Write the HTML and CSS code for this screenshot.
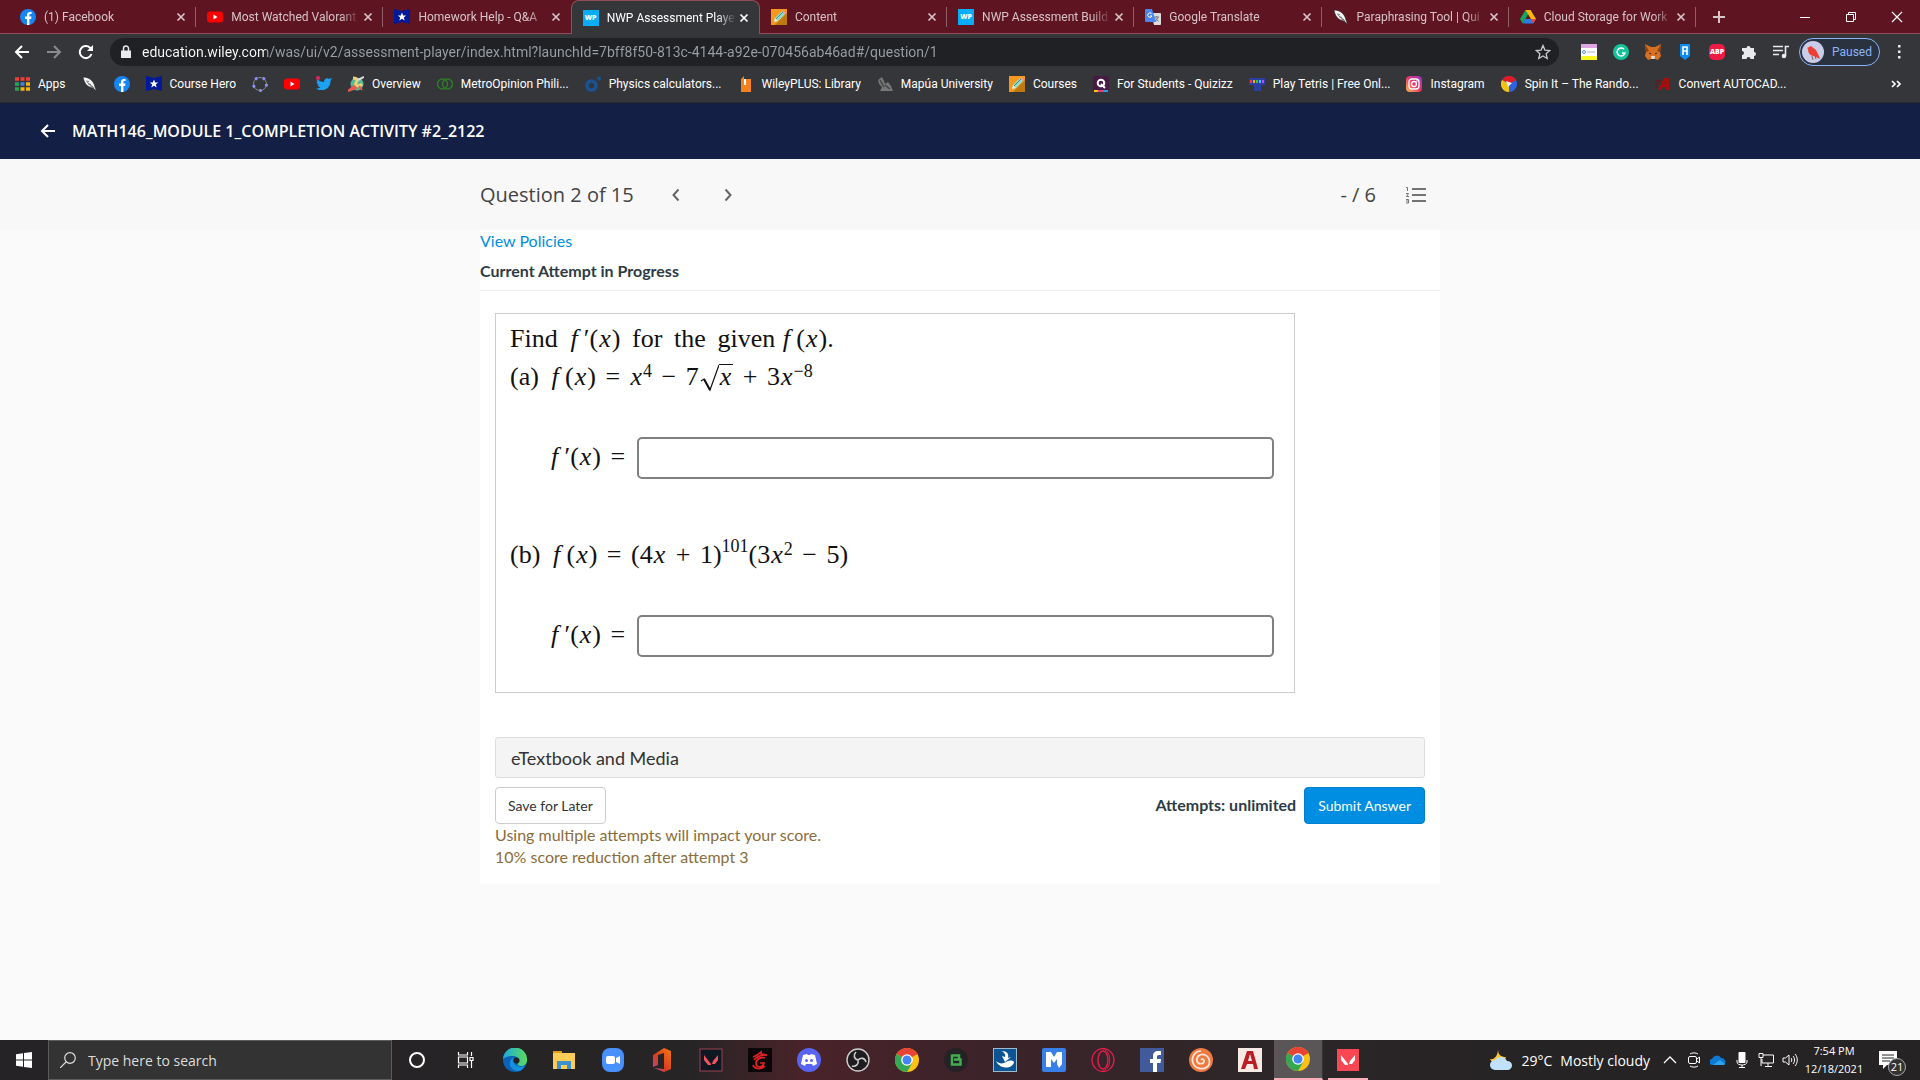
FILE: index.html
```html
<!DOCTYPE html>
<html lang="en">
  <head>
    <meta charset="utf-8" />
    <title>NWP Assessment Player</title>
    <link rel="stylesheet" href="styles.css">
  </head>
  <body>
    <!-- Icons that are used on the page -->
    <svg class="sprite" aria-hidden="true">
      <linearGradient id="insta-fill" x1="0" y1="1" x2="1" y2="0"><stop offset="0" stop-color="#fdc04a" /><stop offset=".5" stop-color="#e8336d" /><stop offset="1" stop-color="#8a3ac8" /></linearGradient>
      <linearGradient id="edge-fill" x1="0" y1="0" x2="1" y2="0"><stop offset="0" stop-color="#1ca8df" /><stop offset="1" stop-color="#5bdc5b" /></linearGradient>
      <linearGradient id="office-fill" x1="0" y1="1" x2="1" y2="0"><stop offset="0" stop-color="#b050a8" /><stop offset=".4" stop-color="#d83b20" /><stop offset="1" stop-color="#f57a12" /></linearGradient>
      <symbol id="facebook" viewBox="0 0 16 16"><circle cx="8" cy="8" r="8" fill="#1685f5" /><path d="M7 16v-6H5V7.600h2V6c0-2 1.200-3.100 3-3.100l1.600.1v2h-1c-1 0-1.200.5-1.200 1.200v1.400h2.100l-.4 2.400H9.400v6z" fill="#fff" /></symbol>
      <symbol id="youtube" viewBox="0 0 16 16"><rect y="2.500" width="16" height="11" rx="3" fill="#f00" /><path d="M6.500 5.500v5l4-2.500z" fill="#fff" /></symbol>
      <symbol id="hero" viewBox="0 0 16 16"><path d="M0 0l8 2 8-2v15l-8-2-8 2z" fill="#00199a" /><path d="M8 3.500l1.200 3h3l-2.400 1.900.9 3.100L8 9.700l-2.700 1.800.9-3.100-2.400-1.900h3z" fill="#fff" /></symbol>
      <symbol id="pencil" viewBox="0 0 16 16"><rect width="16" height="16" fill="#f5981c" /><path d="M16 4v12H4z" fill="#c07810" /><path d="M3 13l1-4 7-7 3 3-7 7z" fill="#8fdcd4" /><path d="M5 10l7-7" stroke="#3c8d88" /><path d="M11 2l1-1 3 3-1 1z" fill="#f49aa0" /><path d="M3 13l1-4 3 3z" fill="#fbe3bb" /></symbol>
      <symbol id="feather" viewBox="0 0 16 16"><path d="M1 1c6 0 11 4 12 10l1.500 4L11 12C5 11 2 7 1 1z" fill="#f4f4f4" stroke="#222" stroke-width=".6" /><path d="M5 6l7 6M4 5l3 .5M6 8l3 .5M8 10l3 .5" stroke="#555" stroke-width=".7" /></symbol>
      <symbol id="drive" viewBox="0 0 16 16"><path d="M5.500 1h5L8 5.500 2.800 14.500 0 10z" fill="#11a75c" /><path d="M5.500 1h5L16 10h-5z" fill="#ffba00" /><path d="M5.300 10H16l-2.800 4.500H2.800z" fill="#2a7bec" /><path d="M11 10h5l-2.800 4.500z" fill="#ea4335" /></symbol>
      <symbol id="close" viewBox="0 0 16 16"><path d="M4.500 4.500l7 7m0-7l-7 7" stroke="currentColor" stroke-width="1.700" /></symbol>
      <symbol id="back" viewBox="0 0 16 16"><path d="M15 8H2m6-6L2 8l6 6" stroke="currentColor" stroke-width="2" fill="none" /></symbol>
      <symbol id="grid" viewBox="0 0 16 16"><path d="M1 3h4m1.500 0h4M12 3h4" stroke="#ee4037" stroke-width="3.500" /><path d="M1 8h4" stroke="#27a35a" stroke-width="3.500" /><path d="M6.500 8h4" stroke="#3a83ed" stroke-width="3.500" /><path d="M12 8h4" stroke="#f6b50b" stroke-width="3.500" /><path d="M1 13h4" stroke="#27a35a" stroke-width="3.500" /><path d="M6.500 13h9.500" stroke="#f6b50b" stroke-width="3.500" stroke-dasharray="4 1.500" /></symbol>
      <symbol id="orbit" viewBox="0 0 16 16"><circle cx="8" cy="8" r="6.500" fill="none" stroke="#888" /><circle cx="8" cy="8" r="6.500" fill="none" stroke="#8f8fff" stroke-width="2.800" stroke-dasharray="2.500 5.670" /></symbol>
      <symbol id="twitter" viewBox="0 0 16 16"><path d="M1 3c2 2 4 3 7 3 0-3 3-5 5-3l3-1-1.500 3C14.500 11 10 14.500 5 14 3 14 1.500 13.500 0 12.500c2 0 3.500-.4 4.500-1.200C3 11 2 10 1.600 9H3C1.500 8.500.6 7 .6 5.500L2 6C.7 5 .4 4 1 3z" fill="#1da1f2" /><circle cx="2" cy="2" r="2" fill="#e0245e" /></symbol>
      <symbol id="planet" viewBox="0 0 16 16"><circle cx="9" cy="8" r="6.500" fill="#57b896" /><path d="M5 2c4 0 5 2 3 5s3 4 6 1" stroke="#f4cf77" stroke-width="3" fill="none" /><path d="M0 15l6-5 2 2zM11 10l3 4" stroke="#e85a50" stroke-width="2" fill="#e85a50" /><path d="M10 4l6-3" stroke="#ddd" stroke-width="2" /></symbol>
      <symbol id="rings" viewBox="0 0 16 16"><circle cx="5.500" cy="8" r="5" fill="none" stroke="#2f7a26" stroke-width="1.500" /><circle cx="10.500" cy="8" r="5" fill="none" stroke="#2f7a26" stroke-width="1.500" /></symbol>
      <symbol id="omni" viewBox="0 0 16 16"><circle cx="6.500" cy="9.500" r="4.500" fill="none" stroke="#1b5291" stroke-width="3.600" /><circle cx="14" cy="2.500" r="2" fill="#1b5291" /></symbol>
      <symbol id="book" viewBox="0 0 16 16"><path d="M3 3l3-3v3h7v13H3z" fill="#f58220" /><path d="M6 3h2v6H6z" fill="#fff" /></symbol>
      <symbol id="mapua" viewBox="0 0 16 16"><path d="M1 4l4-3 2 4 1 3 3-2 3 4 2 5H3l2-4-3-3z" fill="#777" /><path d="M3 4l4 7M8 9l5 4" stroke="#444" stroke-width="1.500" /></symbol>
      <symbol id="quizizz" viewBox="0 0 16 16"><rect width="16" height="16" rx="2" fill="#461a42" /><circle cx="8" cy="7" r="3.300" fill="none" stroke="#fff" stroke-width="2" /><path d="M8 8l4 4" stroke="#fff" stroke-width="2" /><path d="M1 15h4" stroke="#fc0" stroke-width="2" /><path d="M5 15h5" stroke="#ec3d75" stroke-width="2" /><path d="M10 15h5" stroke="#1fa2e0" stroke-width="2" /></symbol>
      <symbol id="tetris" viewBox="0 0 16 16"><path d="M0 2h16v7h-4v6H5V9H0z" fill="#2c3fa0" /><path d="M2 4v3" stroke="#f33" stroke-width="2" /><path d="M5 4v3" stroke="#fa0" stroke-width="2" /><path d="M8 4v3" stroke="#2c4" stroke-width="2" /><path d="M11 4v3" stroke="#3cf" stroke-width="2" /><path d="M14 4v3" stroke="#c4f" stroke-width="2" /></symbol>
      <symbol id="instagram" viewBox="0 0 16 16"><rect width="16" height="16" rx="4" fill="url(#insta-fill)" /><rect x="3" y="3" width="10" height="10" rx="3" fill="none" stroke="#fff" stroke-width="1.300" /><circle cx="8" cy="8" r="2.500" fill="none" stroke="#fff" stroke-width="1.300" /><circle cx="11" cy="5" r=".8" fill="#fff" /></symbol>
      <symbol id="wheel" viewBox="0 0 16 16"><circle cx="8" cy="8" r="8" fill="#2d62e8" /><path d="M8 8L1 4a8 8 0 0 1 14 0z" fill="#e01b24" /><path d="M8 8v8A8 8 0 0 1 1 4z" fill="#f5c211" /><path d="M5 5l6 2-4 4z" fill="#eee" /></symbol>
      <symbol id="cad" viewBox="0 0 16 16"><path d="M3 14L9 2h5v12h-3v-3H8l-2 3zM9 8h2V5z" fill="#a80d0d" fill-rule="evenodd" /><path d="M0 5h6M0 8h4M0 11h3" stroke="#651a1c" stroke-width="1.500" /></symbol>
      <symbol id="chrome" viewBox="0 0 24 24"><circle cx="12" cy="12" r="12" fill="#fbc116" /><path d="M12 12L1.600 6A12 12 0 0 1 22.400 6z" fill="#e94335" /><path d="M12 12L1.600 6A12 12 0 0 0 12 24l5.200-9z" fill="#35a853" /><path d="M12 6h10.400" stroke="#e94335" /><circle cx="12" cy="12" r="5.800" fill="#fff" /><circle cx="12" cy="12" r="4.500" fill="#4285f4" /></symbol>
      <symbol id="valorant" viewBox="0 0 24 24"><path d="M5 7l7 9v1H9l-4-5zm14 0v5l-3 4h-3l1-3z" fill="currentColor" /></symbol>
    </svg>

    <!-- Browser window -->
    <header class="browser">
      <div class="tab-strip">
        <nav class="tabs">
          <div class="tab"><svg class="icon"><use href="#facebook" /></svg><span class="tab-title">(1) Facebook</span><button class="tab-close" aria-label="Close"><svg class="icon"><use href="#close" /></svg></button></div>
          <div class="tab"><svg class="icon"><use href="#youtube" /></svg><span class="tab-title">Most Watched Valorant</span><button class="tab-close" aria-label="Close"><svg class="icon"><use href="#close" /></svg></button></div>
          <div class="tab"><svg class="icon"><use href="#hero" /></svg><span class="tab-title">Homework Help - Q&amp;A</span><button class="tab-close" aria-label="Close"><svg class="icon"><use href="#close" /></svg></button></div>
          <div class="tab active"><span class="wiley-icon">WP</span><span class="tab-title">NWP Assessment Playe</span><button class="tab-close" aria-label="Close"><svg class="icon"><use href="#close" /></svg></button></div>
          <div class="tab"><svg class="icon"><use href="#pencil" /></svg><span class="tab-title">Content</span><button class="tab-close" aria-label="Close"><svg class="icon"><use href="#close" /></svg></button></div>
          <div class="tab"><span class="wiley-icon">WP</span><span class="tab-title">NWP Assessment Build</span><button class="tab-close" aria-label="Close"><svg class="icon"><use href="#close" /></svg></button></div>
          <div class="tab"><svg class="icon" viewBox="0 0 16 16"><path d="M6 4h9a1 1 0 0 1 1 1v10a1 1 0 0 1-1 1H9z" fill="#dcdcdc" /><path d="M1 0h6l4 13H1a1 1 0 0 1-1-1V1a1 1 0 0 1 1-1z" fill="#4b86ee" /><path d="M6.500 4.500a2.200 2.200 0 1 0 .5 2.500H5" stroke="#fff" fill="none" /><path d="M9 8h5M11.500 7v1M13 8c0 2-1.500 3-3 4M10.500 9l3 3.500" stroke="#6b7a86" fill="none" /></svg><span class="tab-title">Google Translate</span><button class="tab-close" aria-label="Close"><svg class="icon"><use href="#close" /></svg></button></div>
          <div class="tab"><svg class="icon"><use href="#feather" /></svg><span class="tab-title">Paraphrasing Tool | Qui</span><button class="tab-close" aria-label="Close"><svg class="icon"><use href="#close" /></svg></button></div>
          <div class="tab"><svg class="icon"><use href="#drive" /></svg><span class="tab-title">Cloud Storage for Work</span><button class="tab-close" aria-label="Close"><svg class="icon"><use href="#close" /></svg></button></div>
        </nav>
        <div class="window-buttons">
          <button aria-label="New tab"><svg class="icon" viewBox="0 0 16 16"><path d="M8 2v12M2 8h12" stroke="#d9c4c8" stroke-width="2" /></svg></button>
          <button class="minimize" aria-label="Minimize"><svg class="icon" viewBox="0 0 16 16"><path d="M3 8.500h10" stroke="#fff" /></svg></button>
          <button aria-label="Restore"><svg class="icon" viewBox="0 0 16 16"><path d="M3.500 5.500h7v7h-7zM5.500 5V3.500h7v7H11" stroke="#fff" fill="none" /></svg></button>
          <button aria-label="Close window"><svg class="icon" viewBox="0 0 16 16"><path d="M3 3l10 10M13 3L3 13" stroke="#fff" stroke-width="1.200" /></svg></button>
        </div>
      </div>

      <div class="toolbar">
        <button aria-label="Back"><svg class="icon"><use href="#back" /></svg></button>
        <button class="forward" aria-label="Forward"><svg class="icon" viewBox="0 0 16 16"><path d="M1 8h13M8 2l6 6-6 6" stroke="currentColor" stroke-width="2" fill="none" /></svg></button>
        <button aria-label="Reload"><svg class="icon" viewBox="0 0 16 16"><path d="M13.500 10A6 6 0 1 1 12 3.800l1.500 1.500" stroke="currentColor" stroke-width="2" fill="none" /><path d="M15 1v6H9z" fill="currentColor" /></svg></button>
        <div class="address">
          <svg class="icon" viewBox="0 0 16 16"><path d="M3 6.500h10V14H3z" fill="#e8eaed" /><path d="M5.500 7V4.500a2.500 2.500 0 0 1 5 0V7" stroke="#e8eaed" stroke-width="1.500" fill="none" /></svg>
          <input class="url" type="text" aria-label="Address" value="education.wiley.com/was/ui/v2/assessment-player/index.html?launchId=7bff8f50-813c-4144-a92e-070456ab46ad#/question/1" />
          <svg class="icon" viewBox="0 0 16 16"><path d="M8 1.500l1.900 4.600 4.900.4-3.700 3.200 1.100 4.800L8 11.900l-4.200 2.600 1.100-4.800L1.200 6.500l4.900-.4z" fill="none" stroke="#c8cacd" stroke-width="1.300" /></svg>
        </div>
        <div class="extensions">
          <svg class="icon" viewBox="0 0 16 16"><path d="M0 0h16v16H0z" fill="#fff" /><path d="M0 0h16v4H0z" fill="#dfa6e4" /><path d="M0 12h16v4H0z" fill="#f7f722" /><circle cx="3" cy="8" r="1.500" fill="none" stroke="#4a90e2" /><path d="M6 8h8" stroke="#a9b5c9" /></svg>
          <svg class="icon" viewBox="0 0 16 16"><circle cx="8" cy="8" r="8" fill="#15c39a" /><path d="M11 5.200A4 4 0 1 0 12 9H9" fill="none" stroke="#fff" stroke-width="1.500" /></svg>
          <svg class="icon" viewBox="0 0 16 16"><path d="M0 0l6 3h4l6-3-1 8 1 4-3 4-3-1H6l-3 1-3-4 1-4z" fill="#d96f20" /><path d="M0 0l4 7-3 1zM16 0l-4 7 3 1z" fill="#8a4412" /><path d="M6 12h4l-.5 3h-3z" fill="#ddd" /><path d="M4 9l2 1M12 9l-2 1" stroke="#222" /></svg>
          <svg class="icon" viewBox="0 0 16 16"><path d="M3 0h10v12l-5 4-5-4z" fill="#0c8cf5" /><path d="M6 3h4v4H6zM6 3v8m4-4v4" stroke="#fff" stroke-width="1.600" fill="none" /></svg>
          <span class="abp-icon">ABP</span>
          <svg class="icon" viewBox="0 0 16 16"><path d="M1 4h4.500a2 2 0 1 1 4 0H13v4a2 2 0 1 1 0 4v3H9.500a2 2 0 1 0-4 0H1v-4a2 2 0 1 0 0-4z" fill="#e8eaed" /></svg>
          <svg class="icon" viewBox="0 0 16 16"><path d="M0 2.500h10M0 6.500h10M0 10.500h6M12.500 12V2.500H16" stroke="#e8eaed" stroke-width="1.600" fill="none" /><circle cx="11" cy="12" r="2.300" fill="#e8eaed" /></svg>
        </div>
        <button class="profile"><svg class="avatar" viewBox="0 0 22 22"><circle cx="11" cy="11" r="11" fill="#c9cdea" /><path d="M5 7l4-2 5 4 3 6 1 3-6-3c-4 0-6-3-6-7z" fill="#ee3f35" /><path d="M10 15l1 4m2-4l1 3" stroke="#8f5a55" /></svg>Paused</button>
        <button class="menu" aria-label="Menu"><svg class="icon" viewBox="0 0 16 16"><path d="M7 1h2.500v2.500H7zM7 6.500h2.500V9H7zM7 12h2.500v2.500H7z" fill="#e8eaed" /></svg></button>
      </div>

      <nav class="bookmarks">
        <a href="#"><svg class="icon"><use href="#grid" /></svg>Apps</a>
        <a href="#" aria-label="QuillBot"><svg class="icon"><use href="#feather" /></svg></a>
        <a href="#" aria-label="Facebook"><svg class="icon"><use href="#facebook" /></svg></a>
        <a href="#"><svg class="icon"><use href="#hero" /></svg>Course Hero</a>
        <a href="#" aria-label="GeoGebra"><svg class="icon"><use href="#orbit" /></svg></a>
        <a href="#" aria-label="YouTube"><svg class="icon"><use href="#youtube" /></svg></a>
        <a href="#" aria-label="Twitter"><svg class="icon"><use href="#twitter" /></svg></a>
        <a href="#"><svg class="icon"><use href="#planet" /></svg>Overview</a>
        <a href="#"><svg class="icon"><use href="#rings" /></svg>MetroOpinion Phili...</a>
        <a href="#"><svg class="icon"><use href="#omni" /></svg>Physics calculators...</a>
        <a href="#"><svg class="icon"><use href="#book" /></svg>WileyPLUS: Library</a>
        <a href="#"><svg class="icon"><use href="#mapua" /></svg>Mapúa University</a>
        <a href="#"><svg class="icon"><use href="#pencil" /></svg>Courses</a>
        <a href="#"><svg class="icon"><use href="#quizizz" /></svg>For Students - Quizizz</a>
        <a href="#"><svg class="icon"><use href="#tetris" /></svg>Play Tetris | Free Onl...</a>
        <a href="#"><svg class="icon"><use href="#instagram" /></svg>Instagram</a>
        <a href="#"><svg class="icon"><use href="#wheel" /></svg>Spin It – The Rando...</a>
        <a href="#"><svg class="icon"><use href="#cad" /></svg>Convert AUTOCAD...</a>
        <button class="more" aria-label="More bookmarks"><svg class="icon" viewBox="0 0 16 16"><path d="M4 5l3 3-3 3m5-6l3 3-3 3" stroke="#fff" stroke-width="1.700" fill="none" /></svg></button>
      </nav>
    </header>

    <!-- Assessment player -->
    <div class="course-bar">
      <a href="#" aria-label="Back to course"><svg class="icon"><use href="#back" /></svg></a>
      <h1>MATH146_MODULE 1_COMPLETION ACTIVITY #2_2122</h1>
    </div>

    <div class="question-bar">
      <div class="question-nav">
        <h2>Question 2 of 15</h2>
        <button aria-label="Previous question"><svg class="icon" viewBox="0 0 16 16"><path d="M10.500 2.500L5.500 8l5 5.500" stroke="#666" stroke-width="2" fill="none" /></svg></button>
        <button aria-label="Next question"><svg class="icon" viewBox="0 0 16 16"><path d="M5.500 2.500l5 5.500-5 5.500" stroke="#666" stroke-width="2" fill="none" /></svg></button>
        <span class="score">- / 6</span>
        <button class="list-button" aria-label="Question list"><svg class="list-icon" viewBox="0 0 20 18"><path d="M6 3h14M6 9h14M6 15h14" stroke="#737373" stroke-width="2" /><path d="M0 1.500h1.500V5M0 7.500h2.500L.5 10.500H3M0 13.500h2.500v3.500H0M0 15h2" stroke="#737373" fill="none" /></svg></button>
      </div>
    </div>

    <main class="card">
      <a class="policies" href="#">View Policies</a>
      <p class="attempt">Current Attempt in Progress</p>

      <div class="question">
        <p>Find&thinsp; <i>f</i>&thinsp;′(<i>x</i>)&thinsp; for&thinsp; the&thinsp; given <i>f</i>&thinsp;(<i>x</i>).</p>
        <p>(a)&thinsp; <i>f</i>&thinsp;(<i>x</i>) <b>=</b> <i>x</i><sup>4</sup> <b>−</b> 7<svg class="root" viewBox="0 0 20 28"><path d="M2 17l3-2 6 11L20 1" fill="none" stroke="#111" stroke-width="1.200" /><path d="M5 15l6 11" stroke="#111" stroke-width="2" /></svg><span class="radicand"><i>x</i></span> <b>+</b> 3<i>x</i><sup>−8</sup></p>
        <div class="answer">
          <label for="answer-a"><i>f</i>&thinsp;′(<i>x</i>) <b>=</b></label>
          <input type="text" id="answer-a" />
        </div>
        <p>(b)&thinsp; <i>f</i>&thinsp;(<i>x</i>) <b>=</b> (4<i>x</i> <b>+</b> 1)<sup class="high">101</sup>(3<i>x</i><sup>2</sup> <b>−</b> 5)</p>
        <div class="answer">
          <label for="answer-b"><i>f</i>&thinsp;′(<i>x</i>) <b>=</b></label>
          <input type="text" id="answer-b" />
        </div>
      </div>

      <div class="actions">
        <button class="media-button">eTextbook and Media</button>
        <div class="submit-row">
          <button class="save-button">Save for Later</button>
          <span class="attempts">Attempts: unlimited</span>
          <button class="submit-button">Submit Answer</button>
        </div>
        <p class="warning">Using multiple attempts will impact your score.<br />10% score reduction after attempt 3</p>
      </div>
    </main>

    <!-- Windows taskbar -->
    <footer class="taskbar">
      <button class="start" aria-label="Start"><svg class="icon" viewBox="0 0 16 16"><path d="M0 2.200l7-1v6.300H0zM8 1l8-1v7.500H8zM0 8.500h7v6.300l-7-1zM8 8.500h8V16l-8-1z" fill="#fff" /></svg></button>
      <label class="search">
        <svg class="icon" viewBox="0 0 16 16"><circle cx="10" cy="6" r="5.300" fill="none" stroke="#ddd" stroke-width="1.200" /><path d="M6 10l-6 6" stroke="#ddd" stroke-width="1.200" /></svg>
        <input type="text" placeholder="Type here to search" aria-label="Search" />
      </label>
      <div class="apps">
        <button aria-label="Cortana"><svg viewBox="0 0 24 24"><circle cx="12" cy="12" r="7" fill="none" stroke="#fff" stroke-width="2" /></svg></button>
        <button aria-label="Task view"><svg viewBox="0 0 24 24"><path d="M4.500 4v3h9V4M4.500 20v-3h9v3M4.500 9h9v6h-9zM17.500 4v4m0 5v7M16 9.500h3v3h-3z" fill="none" stroke="#fff" stroke-width="1.200" /></svg></button>
        <button aria-label="Edge"><svg viewBox="0 0 24 24"><circle cx="12" cy="12" r="12" fill="#0b62b8" /><path d="M0 11A12 12 0 0 1 24 12c0 4-3 6-6 6-3 0-4-1-3-3 2-4-1-7-5-7-5 0-8 1-10 3z" fill="url(#edge-fill)" /><path d="M15 23C6 23 4 12 11 9c-3 5 2 12 11 9-2 3-4 5-7 5z" fill="#1490df" /><circle cx="13.500" cy="12.500" r="3" fill="#242226" /></svg></button>
        <button aria-label="File Explorer"><svg viewBox="0 0 24 24"><path d="M1 3h9v4H1z" fill="#e09b11" /><path d="M1 5h22v16H1z" fill="#fcce58" /><path d="M5 21v-8h14v8h-4v-4H9v4z" fill="#3c91cf" /></svg></button>
        <button aria-label="Zoom"><svg viewBox="0 0 24 24"><rect x="1" width="22" height="24" rx="8" fill="#4890fa" /><rect x="5" y="8" width="9" height="8" rx="2" fill="#fff" /><path d="M15 10l4-2v8l-4-2z" fill="#fff" /></svg></button>
        <button aria-label="Office"><svg viewBox="0 0 24 24"><path d="M3 7l11-7 7 3v18l-7 3-10-4 10 1V5L8 7v10l-5 2z" fill="url(#office-fill)" /></svg></button>
        <button class="agent-dark" aria-label="Valorant Tracker"><svg viewBox="0 0 24 24"><rect x="1" y="1" width="22" height="22" fill="#0f1722" stroke="#9b4351" /><use href="#valorant" /></svg></button>
        <button aria-label="Garena"><svg viewBox="0 0 24 24"><rect width="24" height="24" rx="1" fill="#080607" /><path d="M5 9c3-1 5-2 8-5v2l6 1c-5 0-10 1-13 5M17 10c-4-1-9 1-9 5 0 5 7 5 8 0h-4M5 17c1 4 8 5 12 1" fill="none" stroke="#e02227" stroke-width="1.700" /></svg></button>
        <button aria-label="Discord"><svg viewBox="0 0 24 24"><circle cx="12" cy="12" r="12" fill="#5865f2" /><path d="M6 7l4-1 1 1h2l1-1 4 1 2 9-4 2-1-2H9l-1 2-4-2z" fill="#fff" /><circle cx="9.500" cy="12.500" r="1.500" fill="#5865f2" /><circle cx="14.500" cy="12.500" r="1.500" fill="#5865f2" /></svg></button>
        <button aria-label="OBS Studio"><svg viewBox="0 0 24 24"><circle cx="12" cy="12" r="11" fill="#1e1c1e" stroke="#ccc" stroke-width="1.400" /><path d="M12 12c-4-1-5-5-2-8m2 8c3-3 7-2 8 2m-8-2c1 4-2 7-6 6" fill="none" stroke="#ccc" stroke-width="1.600" /></svg></button>
        <button aria-label="Chrome"><svg><use href="#chrome" /></svg></button>
        <button aria-label="Bandicam"><svg viewBox="0 0 24 24"><circle cx="12" cy="12" r="12" fill="#242224" /><path d="M8 7.500h7v4M8 6.500v10h8.500v-5H10" fill="none" stroke="#41ad51" stroke-width="2.500" /></svg></button>
        <button aria-label="Installer"><svg viewBox="0 0 24 24"><rect x=".5" y=".5" width="23" height="23" fill="#0c5595" stroke="#9db9cc" /><path d="M3 13c3 3 7 3 10 1 3-2 7-2 8 0-1 7-14 8-18-1zM9 3c5 0 7 3 6 7l3-1-6 5-3-6 3 1c1-3-1-4-3-6z" fill="#fff" /></svg></button>
        <button aria-label="Messages"><svg viewBox="0 0 24 24"><rect width="24" height="24" rx="2" fill="#397fe9" /><path d="M4 19V4h5l3 5 3-5h5v12l-3 4-2-4v-5l-3 4-3-4v8z" fill="#fff" /></svg></button>
        <button aria-label="Opera GX"><svg viewBox="0 0 24 24"><ellipse cx="12" cy="12" rx="11" ry="11.500" fill="none" stroke="#e01d4c" stroke-width="1.300" /><ellipse cx="12" cy="12" rx="5" ry="9" fill="none" stroke="#e01d4c" stroke-width="1.500" /><path d="M12 1c9 2 9 20 0 22" fill="none" stroke="#e01d4c" /></svg></button>
        <button aria-label="Facebook"><svg viewBox="0 0 24 24"><path d="M0 0h24v24H0z" fill="#405a9c" /><path d="M13 24v-9h-3v-4h3V8c0-3 2-5 5-5h3v4h-2c-2 0-2 1-2 2v2h4l-.5 4H17v9z" fill="#fff" /></svg></button>
        <button aria-label="Swirl"><svg viewBox="0 0 24 24"><circle cx="12" cy="12" r="12" fill="#ef7a40" /><path d="M12 12c1-2 4 0 3 2s-6 3-7-1 3-8 8-6 6 9 2 12-12 2-14-4S6 3 12 3" fill="none" stroke="#ffe8db" stroke-width="1.700" /></svg></button>
        <button aria-label="AutoCAD"><svg viewBox="0 0 24 24"><path d="M0 0h24v24H0z" fill="#f8e9e4" /><path d="M3 21L9 3h6l5 18h-4l-1-5H9l-2 5zm7-8h4l-2-7z" fill="#b91e25" fill-rule="evenodd" /></svg></button>
        <button class="running" aria-label="Chrome window"><svg><use href="#chrome" /></svg></button>
        <button class="open agent-red" aria-label="Valorant"><svg viewBox="0 0 24 24"><rect x="1" y="1" width="22" height="22" fill="#fb4653" /><use href="#valorant" /></svg></button>
      </div>

      <div class="tray">
        <button class="weather"><svg viewBox="0 0 24 24"><path d="M9 1c0 6 3 8 8 8-2 8-13 9-16 2 5 1 8-4 8-10z" fill="#fdc52d" /><path d="M6 22a5 5 0 0 1 0-10 7 7 0 0 1 12 1 4.500 4.500 0 0 1 1 9z" fill="#c1e1fa" /></svg><span>29°C</span><span>Mostly cloudy</span></button>
        <svg viewBox="0 0 16 16"><path d="M2 11l6-6 6 6" fill="none" stroke="#fff" stroke-width="1.300" /></svg>
        <svg viewBox="0 0 16 16"><rect x="2.500" y="4.500" width="8" height="7" rx="1.500" fill="none" stroke="#fff" /><path d="M11 7l2.500-2v6L11 9M4 2c2-1.500 6-1.500 8 0M4 14c2 1.500 6 1.500 8 0" fill="none" stroke="#fff" /></svg>
        <svg viewBox="0 0 16 16"><path d="M3 13a3 3 0 0 1-1-6 5 5 0 0 1 9-1 4 4 0 0 1 3 7z" fill="#0f7ad6" /><path d="M3 13l7-5 5 4-1 1z" fill="#2aa5ec" /></svg>
        <svg viewBox="0 0 16 16"><rect x="4.500" y="0" width="7" height="11" rx="1" fill="#fff" /><path d="M3 8v2c0 4 10 4 10 0V8M8 13v3M5 15.500h6" fill="none" stroke="#fff" /></svg>
        <svg viewBox="0 0 16 16"><path d="M5 3h10.500v8H4V7M1 1.500h4v4H1zM3 6v8M7 14.500h7M10 11v3" fill="none" stroke="#fff" /></svg>
        <svg viewBox="0 0 16 16"><path d="M1 6h2.500L7 3v10l-3.500-3H1zM9 6c1 1 1 3 0 4M11 4c2 2 2 6 0 8M13 2c3 3 3 9 0 12" fill="none" stroke="#fff" /></svg>
        <div class="clock"><time>7:54 PM</time><time>12/18/2021</time></div>
        <button class="notices" aria-label="Notifications"><svg viewBox="0 0 20 20"><path d="M1 1h18v14H9l-4 4v-4H1z" fill="#fff" /><path d="M4 5h12M4 8h12M4 11h8" stroke="#262425" /></svg><span class="badge">21</span></button>
      </div>
    </footer>
  </body>
</html>
```
FILE: styles.css
```css
* {
  box-sizing: border-box;
}

body {
  margin: 0;
  min-height: 100vh;
  display: flex;
  flex-direction: column;
  background-color: #fafafa;
  font-family: Lato, sans-serif;
  font-size: 16px;
  color: #2d3b45;
}

button {
  display: flex;
  align-items: center;
  justify-content: center;
  flex-shrink: 0;
  padding: 0;
  border: none;
  background: none;
  color: inherit;
  font-family: inherit;
  cursor: pointer;
}

h1,
h2,
p {
  margin: 0;
}

.sprite {
  position: absolute;
  width: 0;
  height: 0;
}

.icon {
  width: 16px;
  height: 16px;
  flex-shrink: 0;
}

.wiley-icon,
.abp-icon {
  flex-shrink: 0;
  width: 16px;
  height: 16px;
  background-color: #06adf8;
  color: #fff;
  font-family: "Open Sans", sans-serif;
  font-size: 7px;
  font-weight: 800;
  line-height: 16px;
  text-align: center;
}

.abp-icon {
  border-radius: 5px;
  background-color: #ee1b43;
}

/* Browser */
.browser {
  background-color: #35363a;
  color: #fff;
  font-family: Roboto, sans-serif;
  font-size: 12px;
}

.tab-strip {
  display: flex;
  height: 34px;
  padding-left: 9px;
  background-color: #5f1521;
  border-bottom: 1px solid #8f4e58;
}

.tabs {
  display: flex;
  flex: 1;
  min-width: 0;
}

.tab {
  display: flex;
  flex: 1;
  align-items: center;
  gap: 8px;
  min-width: 0;
  height: 34px;
  padding: 0 7px 0 11px;
  color: #d7c3c7;
  background: linear-gradient(#8f5f67, #8f5f67) right center / 1px 20px no-repeat;
}

.tab:nth-child(3) {
  background: none;
}

.tab.active {
  background: #35363a;
  border: 1px solid #8f4e58;
  border-bottom: none;
  border-radius: 8px 8px 0 0;
  color: #fff;
}

.tab-title {
  flex: 1;
  min-width: 0;
  overflow: hidden;
  white-space: nowrap;
  -webkit-mask-image: linear-gradient(to right, #000 85%, transparent);
  mask-image: linear-gradient(to right, #000 85%, transparent);
}

.tab-close {
  margin-left: -8px;
}

.window-buttons {
  display: flex;
}

.window-buttons button {
  width: 46px;
}

.window-buttons .minimize {
  margin-left: 40px;
}

.toolbar {
  display: flex;
  align-items: center;
  gap: 16px;
  height: 36px;
  padding: 0 13px 0 14px;
}

.forward {
  color: #8a8b8e;
}

.address {
  display: flex;
  flex: 1;
  align-items: center;
  gap: 8px;
  height: 28px;
  margin-right: 6px;
  padding: 0 8px;
  border-radius: 14px;
  background-color: #202124;
}

.url {
  flex: 1;
  min-width: 0;
  padding: 0;
  border: none;
  font-family: Roboto, sans-serif;
  font-size: 14px;
  color: transparent;
  background: linear-gradient(to right, #fff 124px, #9aa0a6 124px);
  -webkit-background-clip: text;
  background-clip: text;
}

.extensions {
  display: flex;
  gap: 16px;
}

.profile {
  gap: 8px;
  height: 28px;
  width: 81px;
  justify-content: flex-start;
  margin-left: -6px;
  margin-right: -5px;
  padding: 0 2px;
  border: 1px solid #8ab4f8;
  border-radius: 14px;
  background-color: #2b323f;
  color: #8ab4f8;
  font-size: 12px;
}

.avatar {
  width: 22px;
  height: 22px;
}

.bookmarks {
  display: flex;
  align-items: center;
  gap: 16px;
  height: 33px;
  padding: 0 16px 4px 14px;
  border-bottom: 1px solid #2a2b2e;
}

.bookmarks a {
  display: flex;
  align-items: center;
  gap: 8px;
  color: #fff;
  text-decoration: none;
  white-space: nowrap;
}

.more {
  margin-left: auto;
}

/* Assessment player */
.course-bar {
  display: flex;
  align-items: center;
  gap: 16px;
  height: 56px;
  padding: 0 40px;
  background-color: #141f45;
  color: #fff;
}

.course-bar a {
  display: flex;
  color: #fff;
}

.course-bar h1 {
  font-family: "Open Sans", sans-serif;
  font-size: 16px;
  font-weight: 600;
}

.question-bar {
  background-color: #f8f8f8;
}

.question-nav {
  display: flex;
  align-items: center;
  width: 100%;
  max-width: 960px;
  height: 71px;
  margin: 0 auto;
  padding-right: 14px;
  font-family: "Open Sans", sans-serif;
  font-size: 20px;
  color: #444;
}

.question-nav h2 {
  margin-right: 34px;
  font-size: 20px;
  font-weight: 400;
}

.question-nav button + button {
  margin-left: 36px;
}

.score {
  margin-left: auto;
}

.list-button {
  margin-left: 30px;
}

.list-icon {
  width: 20px;
  height: 18px;
}

.card {
  width: 100%;
  max-width: 960px;
  margin: 0 auto;
  padding-bottom: 16px;
  background-color: #fff;
}

.policies {
  display: block;
  line-height: 22px;
  color: #008ee2;
  text-decoration: none;
}

.attempt {
  padding: 8px 0;
  line-height: 22px;
  border-bottom: 1px solid #eee;
  font-weight: 700;
}

.question {
  width: 800px;
  max-width: 100%;
  margin: 22px 15px 44px;
  padding: 6px 20px 35px 14px;
  border: 1px solid #ccc;
  color: #111;
  font-family: "Liberation Serif", serif;
  font-size: 26px;
}

.question p {
  line-height: 38px;
  white-space: nowrap;
}

.question i {
  margin: 0 1px;
}

.question b {
  margin: 0 3px;
  font-weight: 400;
}

.question sup {
  font-size: 18px;
  line-height: 0;
  vertical-align: 8px;
}

.question .high {
  vertical-align: 11px;
}

.root {
  width: 20px;
  height: 28px;
  vertical-align: -7px;
}

.radicand {
  display: inline-block;
  padding-right: 1px;
  border-top: 1px solid #111;
  line-height: 24px;
}

.answer {
  display: flex;
  align-items: center;
  height: 42px;
  margin: 41px 0 57px 40px;
}

.answer label {
  width: 87px;
  padding-bottom: 3px;
  white-space: nowrap;
}

.answer input {
  flex: 1;
  min-width: 0;
  height: 42px;
  border: 2px solid #808080;
  border-radius: 5px;
  font-size: 20px;
}

.answer:last-child {
  margin-bottom: 0;
}

.actions {
  padding: 0 15px;
}

.media-button {
  width: 100%;
  height: 41px;
  justify-content: flex-start;
  padding-left: 15px;
  border: 1px solid #ddd;
  border-radius: 3px;
  background-color: #f4f4f4;
  color: #333;
  font-size: 18px;
}

.submit-row {
  display: flex;
  align-items: center;
  margin-top: 9px;
}

.save-button,
.submit-button {
  height: 37px;
  padding: 0 12px;
  border: 1px solid #ccc;
  border-radius: 4px;
  background-color: #fff;
  color: #333;
  font-size: 14px;
}

.attempts {
  margin-left: auto;
  margin-right: 8px;
  padding-bottom: 3px;
  font-weight: 700;
}

.submit-button {
  padding: 0 13px;
  border-color: #007fca;
  background-color: #008ee2;
  color: #fff;
}

.warning {
  line-height: 22px;
  color: #8a6d3b;
}

/* Taskbar */
.taskbar {
  display: flex;
  height: 40px;
  margin-top: auto;
  background: linear-gradient(to right, #252325, #272426 36%, #4a2329 42%, #40232a 48%, #2d2628 65%, #252324 80%);
  color: #fff;
  font-family: "Open Sans", sans-serif;
  font-size: 14px;
}

.start {
  width: 48px;
}

.search {
  display: flex;
  flex: 0 1 344px;
  align-items: center;
  gap: 12px;
  padding: 0 11px;
  border: 1px solid #5c5b5b;
  background-color: #333;
}

.search input {
  flex: 1;
  min-width: 0;
  padding: 0;
  border: none;
  background: none;
  font-family: inherit;
  font-size: 14px;
}

.search input::placeholder {
  color: #ddd;
}

.apps {
  display: flex;
}

.apps button {
  width: 49px;
  height: 40px;
}

.apps svg {
  width: 24px;
  height: 24px;
}

.agent-dark {
  color: #f25562;
}

.agent-red {
  color: #fff;
}

.apps .running {
  border-right: 1px solid #333;
  border-bottom: 2px solid #fbaeba;
  background-color: #5a5657;
}

.apps .open {
  background: linear-gradient(#fbaeba, #fbaeba) center bottom / 40px 2px no-repeat;
}

.tray {
  display: flex;
  align-items: center;
  gap: 8px;
  margin-left: auto;
}

.tray > svg {
  width: 16px;
  height: 16px;
  flex-shrink: 0;
}

.weather {
  gap: 8px;
  margin-right: 4px;
  font-size: 14px;
  white-space: nowrap;
}

.weather svg {
  width: 24px;
  height: 24px;
}

.clock {
  display: flex;
  flex-direction: column;
  align-items: center;
  width: 56px;
  font-size: 11px;
  line-height: 18px;
}

.notices {
  position: relative;
  width: 36px;
  height: 40px;
  margin-right: 14px;
}

.notices svg {
  width: 20px;
  height: 20px;
}

.badge {
  position: absolute;
  left: 18px;
  top: 18px;
  width: 18px;
  height: 18px;
  border: 1px solid #aaa;
  border-radius: 9px;
  background-color: #333;
  font-size: 11px;
  line-height: 16px;
  text-align: center;
}
```
